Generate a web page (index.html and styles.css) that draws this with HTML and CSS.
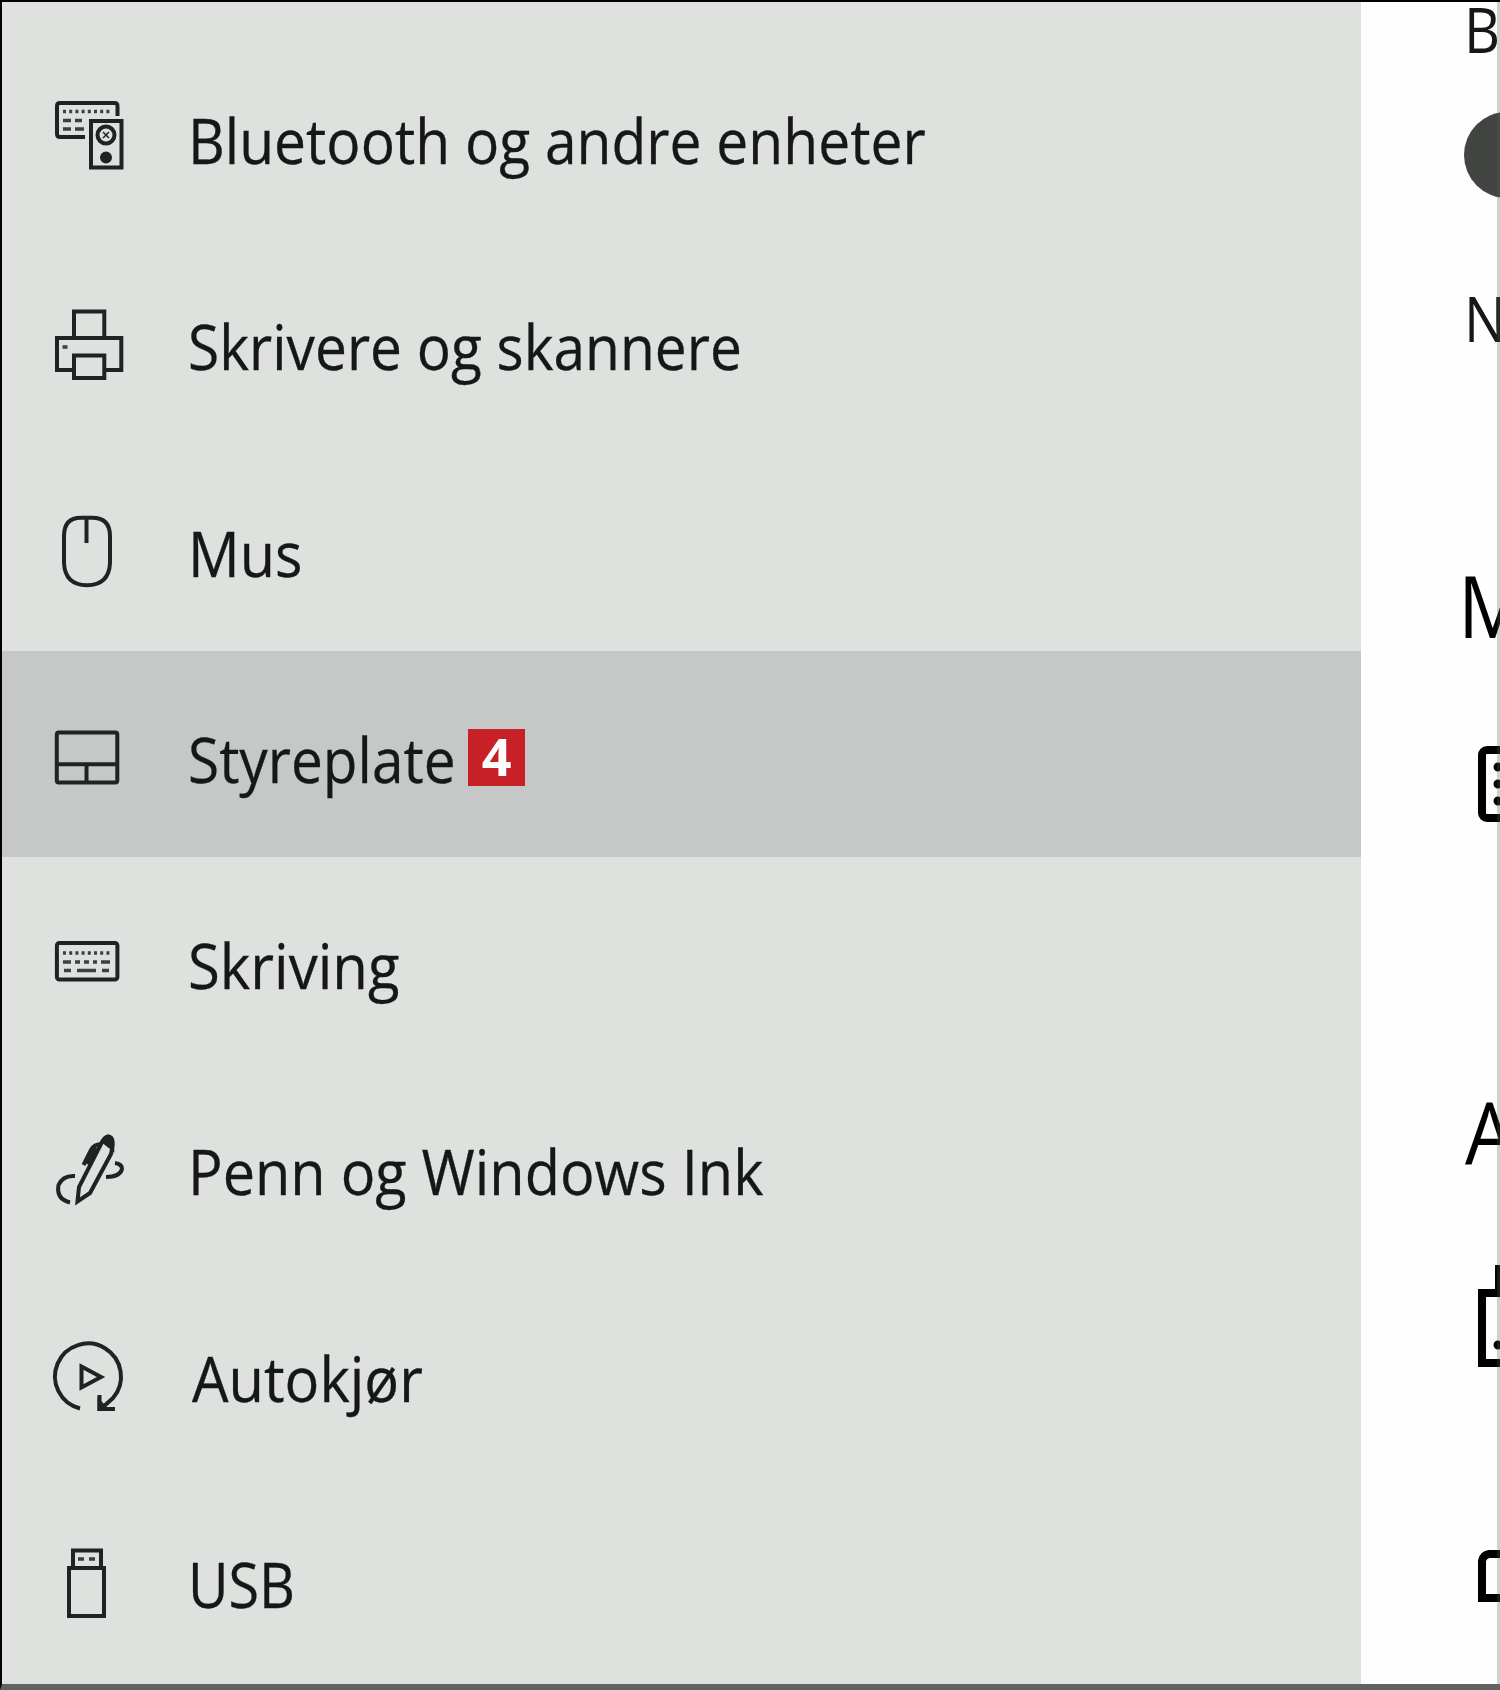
FILE: index.html
```html
<!DOCTYPE html>
<html lang="nb">
<head>
<meta charset="utf-8">
<title>Enheter</title>
<link rel="stylesheet" href="styles.css">
</head>
<body>
<div class="window">
  <nav class="sidebar">
    <a class="item">
      <svg class="icon" viewBox="0 0 72 78"><path d="M64.500 17V7q0-3-3-3H7Q4 4 4 7V35q0 3 3 3H32"/><path class="keys" d="M10 12.500H58" stroke-dasharray="3 3.200"/><path class="keys" d="M10 21.500h8m4 0h7M10 30h8m4 0h9"/><path d="M38 22H68.500V68.500H38Z"/><circle cx="53" cy="36" r="8.500"/><path class="thin" d="M50 33l6 6m0-6l-6 6"/><circle class="solid" cx="53" cy="58.500" r="4"/></svg>
      <span class="label bluetooth">Bluetooth og andre enheter</span>
    </a>
    <a class="item">
      <svg class="icon" viewBox="0 0 72 78"><path d="M21 33V6.500H51.300V33M21 65H4V33H68.300V65H51.300M21 50.500H51.300V73H21Z"/><path class="keys" d="M9.500 42h5"/></svg>
      <span class="label printers">Skrivere og skannere</span>
    </a>
    <a class="item">
      <svg class="icon" viewBox="0 0 72 78"><path d="M28 5.700H39Q57 5.700 57 24V51Q56 73 34 73.300Q12 73 11 51V24Q11 5.700 28 5.700Z"/><path d="M33.500 6V31"/></svg>
      <span class="label mouse">Mus</span>
    </a>
    <a class="item selected">
      <svg class="icon" viewBox="0 0 72 78"><rect x="3.800" y="14.500" width="60.500" height="50" rx="2"/><path d="M3.300 46.300H64.300M33.500 46.300V64"/></svg>
      <span class="label touchpad">Styreplate</span>
      <span class="badge">4</span>
    </a>
    <a class="item">
      <svg class="icon" viewBox="0 0 72 78"><rect x="3.900" y="19" width="60.500" height="36.500" rx="2.500"/><path class="keys" d="M10 29H58" stroke-dasharray="3 3.200"/><path class="keys" d="M10 38h8m4 0h5m4 0h5m4 0h4m4 0h9M11 46.500h7m6 0h19m6 0h7"/></svg>
      <span class="label typing">Skriving</span>
    </a>
    <a class="item">
      <svg class="icon" viewBox="0 0 72 78"><path d="M24.500 71.500L26 57L49 12Q53 5 57 7Q62 9 58 24L37 63Z"/><path class="solid" d="M50 11Q54 4 58 8L59 18Z"/><path d="M30.500 35L38 20Q41 14 49 14M34 34L44 18"/><path d="M22 46Q10 45 5.500 55Q3 69 17 72.500"/><path d="M62 33Q69 34 69 39Q67 47 53 47"/></svg>
      <span class="label pen">Penn og Windows Ink</span>
    </a>
    <a class="item">
      <svg class="icon" viewBox="0 0 72 78"><path d="M27 71.500A33 33 0 1 1 60 61L50 70"/><path d="M46.500 58V72H62"/><path class="solid" d="M46.500 65V72H53Z"/><path d="M28.500 29.500L48 40L28.500 50.500Z"/></svg>
      <span class="label autoplay">Autokjør</span>
    </a>
    <a class="item">
      <svg class="icon" viewBox="0 0 72 78"><path d="M20 24V7.500H48V24M16 25H51V73H16Z"/><path class="keys" d="M25 16h6m5 0h6"/></svg>
      <span class="label usb">USB</span>
    </a>
  </nav>
  <main class="content">
    <p class="text">B</p>
    <div class="toggle"></div>
    <p class="text second">N</p>
    <h2 class="heading">M</h2>
    <svg class="tile mouse-tile" viewBox="0 0 76 76"><rect x="4" y="4" width="68" height="68" rx="5"/><path class="dots" d="M20 21h.1M20 38h.1M20 55h.1"/></svg>
    <h2 class="heading related">A</h2>
    <svg class="tile device-tile" viewBox="0 0 76 102"><path d="M4 28H72V98H4ZM21 28V3H60"/><path class="dots" d="M20 80h.1"/></svg>
    <svg class="tile pad-tile" viewBox="0 0 76 52"><path d="M4 48V11Q5 5 11 4H72V48Z"/></svg>
  </main>
</div>
</body>
</html>
```

FILE: styles.css
```css
* { box-sizing: border-box; }

body {
  margin: 0;
  font-family: "Open Sans", "Noto Sans", sans-serif;
  color: #161817;
}

.window {
  position: relative;
  display: flex;
  width: 1500px;
  height: 1690px;
  overflow: hidden;
  background: #fefefe;
  border-top: 2px solid #000;
  border-left: 2px solid #000;
  border-bottom: 6px solid #626262;
}

/* translucent frame edge that tints what it crosses */
.window::after {
  content: "";
  position: absolute;
  inset: 0 0 0 auto;
  width: 3px;
  background: rgba(90, 88, 90, 0.28);
}

.sidebar {
  flex: none;
  width: 1359px;
  padding-top: 30px;
  background: #dfe1de;
}

.item {
  display: flex;
  align-items: flex-start;
  height: 206.300px;
  padding-left: 51px;
}

.selected {
  position: relative;
  background: #c6c8c7;
}

.icon {
  flex: none;
  width: 72px;
  height: 78px;
  margin-top: 67px;
  overflow: visible;
  fill: none;
  stroke: #202322;
  stroke-width: 4px;
}

.icon .keys { stroke-width: 3.500px; stroke: #3c403e; }
.icon .thin { stroke-width: 1.500px; }
.icon .solid { fill: #202322; }

.label {
  margin: 66px 0 0 63px;
  font-size: 61.500px;
  line-height: 84px;
  white-space: nowrap;
  transform-origin: 0 0;
  -webkit-text-stroke: 0.300px #161817;
}

.bluetooth { transform: scaleX(0.926); }
.printers { transform: scaleX(0.924); }
.mouse { transform: scaleX(0.935); }
.touchpad { transform: scaleX(0.923); }
.typing { transform: scaleX(0.944); }
.pen { transform: scaleX(0.937); }
.autoplay { margin-left: 67px; transform: scaleX(0.940); }
.usb { transform: scaleX(0.905); }

.badge {
  position: absolute;
  left: 466px;
  top: 78px;
  width: 57px;
  height: 57px;
  background: #c72127;
  color: #fff;
  font-size: 52px;
  font-weight: 700;
  line-height: 53px;
  text-align: center;
}

.content {
  flex: 1;
  display: flex;
  flex-direction: column;
  align-items: flex-start;
  overflow: hidden;
  padding-left: 103px;
}

.text, .heading {
  flex: none;
  margin: 0;
  font-weight: 400;
  white-space: nowrap;
  transform-origin: 0 0;
  transform: scaleX(0.900);
}

.text { margin: -15px 0 0 0; font-size: 62px; line-height: 84px; }

.toggle {
  flex: none;
  width: 190px;
  height: 86px;
  margin-top: 41px;
  border-radius: 43px;
  background: #424442;
}

.second { margin-top: 78px; }

.heading {
  margin: 187px 0 0 -6px;
  font-size: 86px;
  line-height: 116px;
  color: #000;
}

.tile {
  flex: none;
  width: 76px;
  margin-left: 14px;
  fill: none;
  stroke: #000;
  stroke-width: 8px;
}

.tile .dots { stroke-width: 9px; stroke-linecap: round; }

.mouse-tile { height: 76px; margin-top: 83px; }
.related { margin: 252px 0 0 1px; }
.device-tile { height: 102px; margin-top: 75px; }
.pad-tile { height: 52px; margin-top: 183px; }
```
